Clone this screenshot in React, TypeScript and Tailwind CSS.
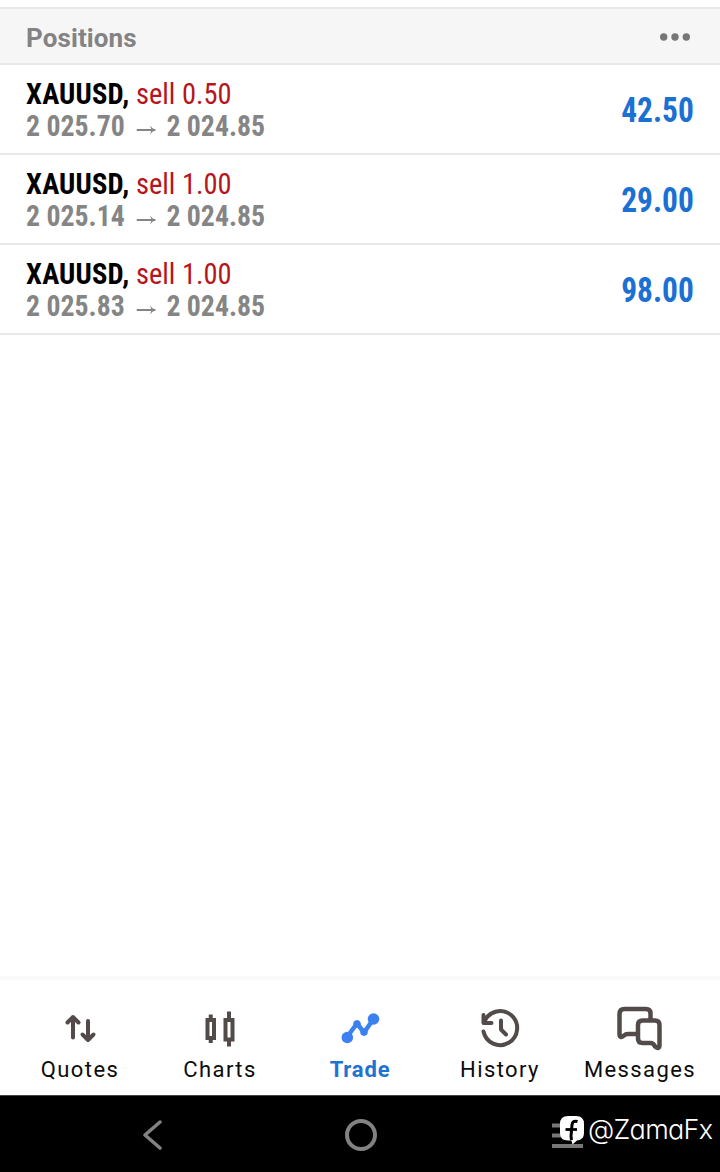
import type { ReactNode } from "react";

type Position = { symbol: string; volume: string; open: string; current: string; profit: string };

const positions: Position[] = [
  { symbol: "XAUUSD", volume: "0.50", open: "025.70", current: "024.85", profit: "42.50" },
  { symbol: "XAUUSD", volume: "1.00", open: "025.14", current: "024.85", profit: "29.00" },
  { symbol: "XAUUSD", volume: "1.00", open: "025.83", current: "024.85", profit: "98.00" },
];

function PositionRow({ p }: { p: Position }) {
  return (
    <div className="flex h-[90px] items-center justify-between border-b-2 border-[#e9e9e9] px-[26px] font-['Roboto_Condensed','Roboto',sans-serif]">
      <div className="pt-px text-[30px] leading-8">
        <div className="origin-left scale-x-[0.95] whitespace-nowrap">
          <span className="font-bold tracking-[0.2px] text-black">{p.symbol},</span>{" "}
          <span className="text-[#b5161b]">sell {p.volume}</span>
        </div>
        <div className="flex origin-left scale-x-[0.926] items-center font-bold whitespace-nowrap text-[#858585]">
          <span>2 {p.open}</span>
          <svg className="mr-[11px] ml-[12px] mt-2 h-3 w-[22px]" viewBox="0 0 22 12" fill="none" stroke="#858585" strokeWidth="1.8">
            <path d="M0.5 6H20.5" />
            <path d="M15 1.5Q17 5 21.5 6Q17 7 15 10.5L16.5 6Z" fill="#858585" stroke="none" />
          </svg>
          <span>2 {p.current}</span>
        </div>
      </div>
      <div className="origin-right scale-x-[0.91] pt-[3px] text-[34.5px] font-bold text-[#1b70d4]">{p.profit}</div>
    </div>
  );
}

function Tab({ label, active, children }: { label: string; active?: boolean; children: ReactNode }) {
  return (
    <div className="flex w-[140px] flex-col items-center">
      <div className="flex h-[48px] w-[48px] items-center justify-center">{children}</div>
      <span className={active ? "mt-[5px] text-[22px] leading-7 font-bold tracking-[0.8px] text-[#1f73d0]" : "mt-[5px] text-[22px] leading-7 tracking-[1.4px] text-[#0c0c0c]"}>
        {label}
      </span>
    </div>
  );
}

export default function App() {
  return (
    <div className="flex h-[1172px] w-[720px] flex-col overflow-hidden bg-white font-['Roboto',sans-serif]">
      <div className="h-[7px]" />
      <div className="flex h-[58px] items-center justify-between border-y-2 border-[#e9e9e9] bg-[#f6f6f6] px-[26px]">
        <h1 className="pt-[4px] text-[26px] font-bold tracking-[0.1px] text-[#838383]">Positions</h1>
        <svg className="mt-[2px] mr-1 h-2 w-[30px]" viewBox="0 0 30 8" fill="#777">
          <circle cx="3.7" cy="4" r="3.7" />
          <circle cx="15" cy="4" r="3.7" />
          <circle cx="26.3" cy="4" r="3.7" />
        </svg>
      </div>
      {positions.map((p, i) => (
        <PositionRow key={i} p={p} />
      ))}
      <div className="flex-1" />
      <nav className="flex h-[119px] justify-center border-t-4 border-[#fafafa] pt-[23px]">
        <Tab label="Quotes">
          <svg className="h-12 w-12" viewBox="0 0 48 48" fill="none" stroke="#534b4a" strokeWidth="4" strokeLinecap="round" strokeLinejoin="round">
            <path d="M17 34.5V14M11.5 19.5L17 14L22.5 19.5" />
            <path d="M32 18V37M26.5 31.5L32 37L37.5 31.5" />
          </svg>
        </Tab>
        <Tab label="Charts">
          <svg className="h-12 w-12" viewBox="0 0 48 48" fill="none" stroke="#534b4a" strokeWidth="4">
            <path d="M11.5 17H18V35H11.5ZM14.75 17V11.5M14.75 35V40" />
            <path d="M29.5 17H36.5V36.5H29.5ZM33 17V8.5M33 36.5V43.5" />
          </svg>
        </Tab>
        <Tab label="Trade" active>
          <svg className="h-12 w-12" viewBox="0 0 48 48" fill="#3b82f0">
            <path d="M11 34L21 20.5L28 29.5L37.5 16" fill="none" stroke="#3b82f0" strokeWidth="4.5" />
            <circle cx="11.3" cy="34.5" r="5.8" />
            <circle cx="21" cy="21" r="3.8" />
            <circle cx="28" cy="29" r="3.8" />
            <circle cx="37.5" cy="16" r="5.8" />
          </svg>
        </Tab>
        <Tab label="History">
          <svg className="h-12 w-12" viewBox="0 0 48 48" fill="none" stroke="#534b4a" strokeWidth="4" strokeLinecap="round" strokeLinejoin="round">
            <path d="M7.5 28.5A17 17 0 1 0 8.5 18.5" />
            <path d="M7.5 12V20H15.5M25 17.5V26.5L30 31.5" />
          </svg>
        </Tab>
        <Tab label="Messages">
          <svg className="h-12 w-12 overflow-visible" viewBox="0 0 48 48" fill="none" stroke="#534b4a" strokeWidth="4.5" strokeLinecap="round" strokeLinejoin="round">
            <path d="M34.5 16V10.5Q34.5 6 30 6H8.5Q3.5 6 3.5 11V31Q3.5 36 8 32.5Q9.5 31 12 31H21" />
            <path d="M26.5 17.5H39Q43.5 17.5 43.5 22V42Q43.5 47 39 43.5Q37.5 40 34.5 40H26.5Q22 40 22 35.5V22Q22 17.5 26.5 17.5Z" />
          </svg>
        </Tab>
      </nav>
      <div className="flex h-[77px] items-center border-t border-[#444] bg-black pt-[2px]">
        <svg className="ml-[142px] h-8 w-5" viewBox="0 0 20 32" fill="none" stroke="#828282" strokeWidth="3.5" strokeLinecap="round" strokeLinejoin="round">
          <path d="M18 3L3 16L18 29" />
        </svg>
        <div className="ml-[183px] h-8 w-8 rounded-full border-[4px] border-[#828282]" />
        <svg className="mb-2 ml-[174px] h-9 w-[34px]" viewBox="0 0 34 36">
          <path d="M1 12.5H32M1 22.5H32M1 33H32" stroke="#777" strokeWidth="3.8" />
          <path d="M17 3H25Q33 3 33 11V20Q33 27 26 27.5L21.5 31.5L20.5 27.5H17Q9 27.5 9 20V11Q9 3 17 3Z" fill="#fff" />
          <path d="M26.5 8.5Q21.5 7 21 12L20 23L20.5 27" stroke="#000" strokeWidth="3" fill="none" />
          <path d="M14.5 16.5H26" stroke="#000" strokeWidth="2.8" />
        </svg>
        <span className="ml-[3px] pb-[10px] font-['Inter',sans-serif] text-[27px] tracking-[-0.7px] text-white [font-feature-settings:'cv11'] [font-weight:350]">@ZamaFx</span>
      </div>
    </div>
  );
}
